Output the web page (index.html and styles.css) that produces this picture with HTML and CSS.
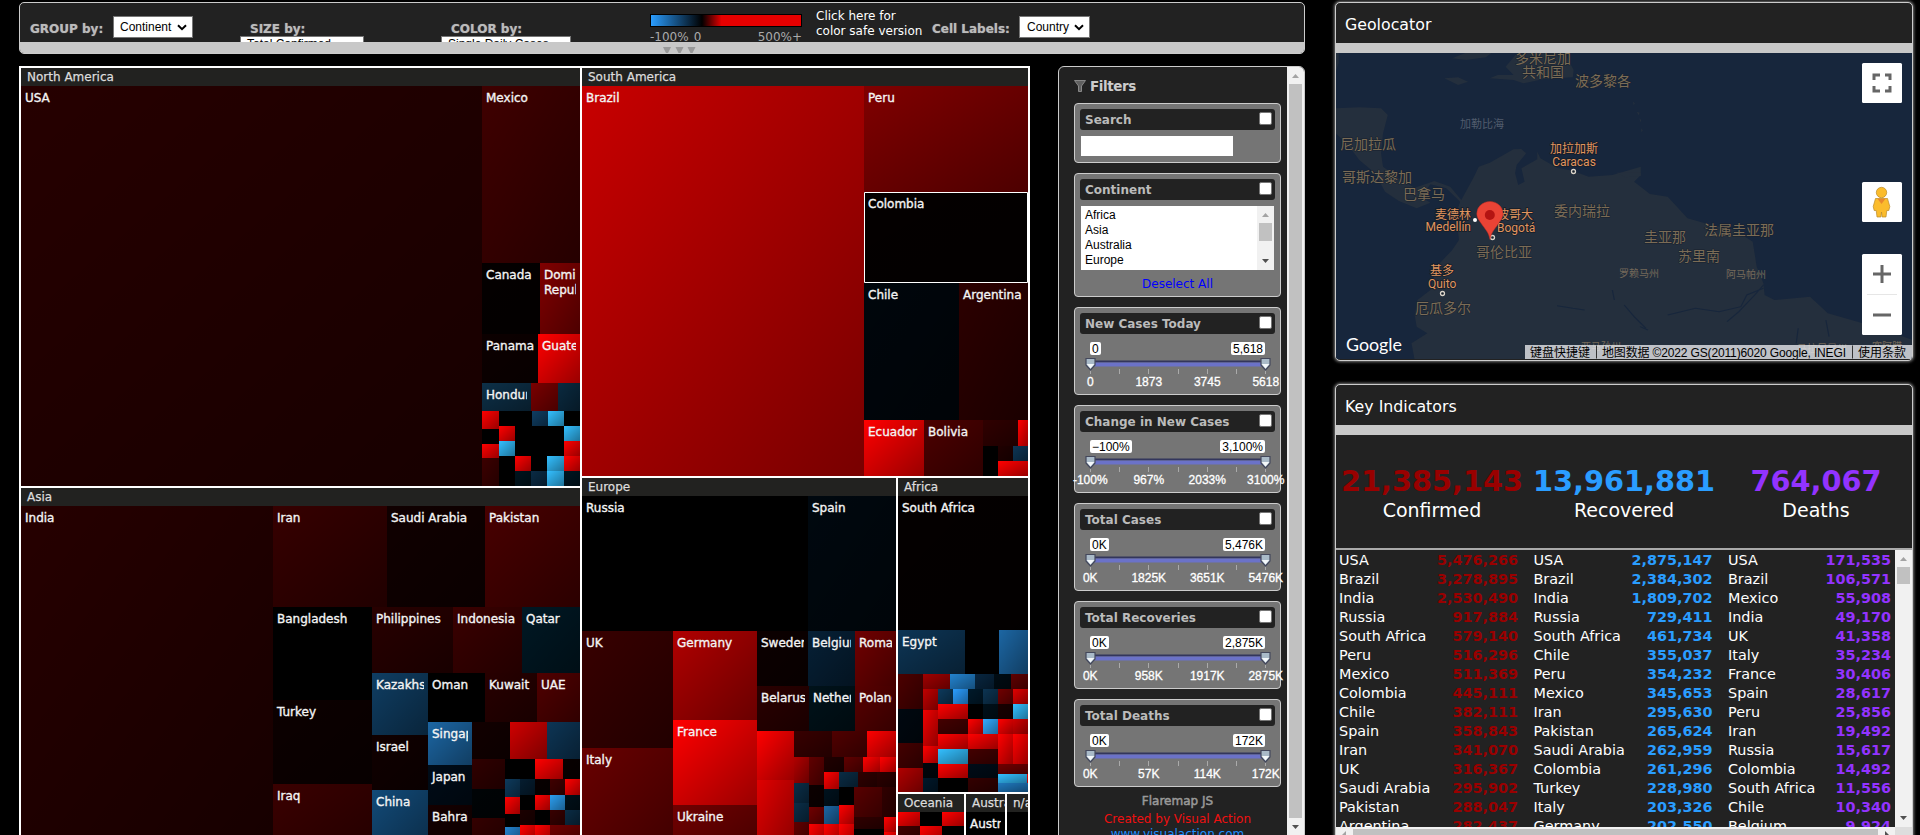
FILE: index.html
```html
<!DOCTYPE html>
<html lang="en">
<head>
<meta charset="utf-8">
<title>Flaremap dashboard</title>
<link rel="stylesheet" href="styles.css">
</head>
<body>
<div class="page">
  <div class="left">
    <header class="toolbar">
      <div class="controls">
        <b class="lbl group-lbl">GROUP by:</b>
        <div class="select sel-group">Continent<svg class="chev" viewBox="0 0 10 7"><path d="M1 1.2l4 4 4-4"/></svg></div>
        <div class="stack size-stack"><b class="lbl">SIZE by:</b><div class="select cut">Total Confirmed</div></div>
        <div class="stack color-stack"><b class="lbl">COLOR by:</b><div class="select cut">Single Daily Cases</div></div>
        <div class="scale">
          <div class="ramp"></div>
          <div class="ramp-labels"><span>-100%</span><span class="zero">0</span><span class="max">500%+</span></div>
          <svg class="marks" viewBox="0 0 34 8"><path d="M0 0h8L4 8zM12.500 0h8l-4 8zM24.500 0h8l-4 8z"/></svg>
        </div>
        <div class="safe">Click here for<br>color safe version</div>
        <b class="lbl cell-lbl">Cell Labels:</b>
        <div class="select sel-cell">Country<svg class="chev" viewBox="0 0 10 7"><path d="M1 1.2l4 4 4-4"/></svg></div>
      </div>
      <div class="strip"></div>
    </header>
    <div class="work">
      <svg class="treemap" id="treemap" viewBox="19 66 1011 769" width="1011" height="769">
        <defs><linearGradient id="shade" x1="0" y1="0" x2="1" y2="1"><stop offset="0" stop-color="#000" stop-opacity="0"/><stop offset="1" stop-color="#000" stop-opacity=".4"/></linearGradient></defs>
      </svg>
      <aside class="filters">
        <div class="filter-list">
          <h2 class="filters-title"><svg class="funnel" viewBox="0 0 12 12"><path d="M.5.500h11L7.500 6v5.500h-3V6z"/></svg>Filters</h2>
          <section class="card"><div class="head">Search<i class="check"></i></div><div class="search"></div></section>
          <section class="card card-list"><div class="head">Continent<i class="check"></i></div>
            <div class="listbox"><div class="options"><div>Africa</div><div>Asia</div><div>Australia</div><div>Europe</div></div>
              <svg class="listbar" viewBox="0 0 17 64"><path fill="#f1f1f1" d="M0 0h17v64H0z"/><path fill="#c1c1c1" d="M2 17h13v18H2z"/><path fill="#a3a3a3" d="M5 11l3.500-4 3.500 4z"/><path fill="#505050" d="M5 53l3.500 4 3.500-4z"/></svg>
            </div><div class="deselect">Deselect All</div></section>
          <div id="sliders"></div>
          <div class="credit"><div class="product">Flaremap JS</div><div class="maker">Created by Visual Action</div><div class="site">www.visualaction.com</div></div>
        </div>
        <div class="vbar"><svg viewBox="0 0 17 17"><path fill="#a3a3a3" d="M5 11l3.500-4 3.500 4z"/></svg><div class="thumb"></div><svg viewBox="0 0 17 17"><path fill="#505050" d="M5 7l3.500 4 3.500-4z"/></svg></div>
      </aside>
    </div>
  </div>
  <div class="right">
    <section class="panel geo">
      <h1 class="title">Geolocator</h1><div class="bar"></div>
      <svg class="map" viewBox="1336 53 577 306" width="577" height="306">
        <rect x="1336" y="53" width="577" height="306" fill="#17263c"/>
        <g transform="translate(1300 0) scale(.3954 .3333)" fill="#242f3d">
          <path d="M290 1080L282 1030L322 1000L295 980L290 945L297 900L330 870L345 800L385 750L402 720L395 640L405 605L370 565L330 553L305 590L330 608L295 625L250 603L215 575L190 520L150 480L125 440L100 410L90 400V325L150 322L205 325L222 345L210 400L205 460L210 500L250 535L290 563L340 543L380 560L408 600L440 530L452 500L480 488L540 448L560 447L572 460L548 495L544 520L552 555L568 545L560 505L600 478L600 455L608 475L650 503L690 512L730 530L790 525L862 500L862 525L845 545L885 582L930 590L980 655L1040 675L1100 690L1145 725L1155 800L1172 850L1175 885L1200 900L1290 890L1335 940L1410 965L1480 990L1550 1020V1080Z"/>
          <path d="M480 235L500 225L540 225L520 200L545 165L600 155L670 160L692 210L690 232L620 236L565 250L540 240ZM365 235L400 232L425 245L400 255ZM385 175L420 158H485L470 172L420 180ZM700 238L740 235L745 250L705 250ZM90 158h8v30l-8 30zM800 518h62v10l-40 4z"/>
          <path d="M842 305l5 5-3 6zM852 335l7 3-3 8zM858 355l5 5-2 7zM863 385l4 6-4 6z"/>
          <g fill="none" stroke="#17263c" stroke-width="3"><path d="M1172 865L1130 885L1115 920L1060 935L1000 925L930 945M1172 855L1150 885L1110 935L1080 965M860 980L880 990M720 930L690 925L650 917M790 870L795 900M1260 985L1255 1030M1330 960L1338 1010M820 915L845 950L875 985"/></g>
        </g>
        <g class="country">
          <text x="1515" y="63">多米尼加</text><text x="1522" y="77">共和国</text><text x="1575" y="86">波多黎各</text>
          <text x="1340" y="149">尼加拉瓜</text><text x="1342" y="182">哥斯达黎加</text><text x="1403" y="199">巴拿马</text>
          <text x="1554" y="216">委内瑞拉</text><text x="1644" y="242">圭亚那</text><text x="1704" y="235">法属圭亚那</text><text x="1678" y="261">苏里南</text>
          <text x="1476" y="257">哥伦比亚</text><text x="1415" y="313">厄瓜多尔</text>
        </g>
        <text class="sea" x="1460" y="128">加勒比海</text>
        <g class="state"><text x="1619" y="277">罗赖马州</text><text x="1726" y="278">阿马帕州</text><text x="1581" y="350">亚马孙州</text><text x="1797" y="352">马拉尼昂州</text><text x="1872" y="350">塞阿腊</text></g>
        <g class="city">
          <text x="1574" y="153" text-anchor="middle">加拉加斯</text><text x="1574" y="165.500" text-anchor="middle">Caracas</text>
          <text x="1471" y="219" text-anchor="end">麦德林</text><text x="1471" y="230.500" text-anchor="end">Medellín</text>
          <text x="1497" y="219">波哥大</text><text x="1497" y="231.500">Bogotá</text>
          <text x="1430" y="275">基多</text><text x="1428" y="287.500">Quito</text>
        </g>
        <circle cx="1475" cy="220" r="2" fill="#fff"/>
        <g fill="#17202b" stroke="#d8d2c8" stroke-width="1.300"><circle cx="1573.500" cy="171.500" r="2"/><circle cx="1442.500" cy="293.500" r="2"/><circle cx="1492.500" cy="237.500" r="2"/></g>
        <path d="M1490 239.500c-1.500-7-3.800-9-7-13.500-3.800-5.500-6.200-8-6.200-12.500a13 12 0 0 1 26.200 0c0 4.500-2.400 7-6.200 12.500-3.200 4.500-5.300 6.500-6.800 13.500z" fill="#ea4335" stroke="#b92c22" stroke-width=".5"/>
        <circle cx="1489.800" cy="215" r="5" fill="#b31412"/>
        <text class="google" x="1346" y="350.500" textLength="56" lengthAdjust="spacingAndGlyphs">Google</text>
        <g fill="#fff"><rect x="1862" y="63" width="40" height="40" rx="1.500"/><rect x="1862" y="182" width="40" height="40" rx="1.500"/><rect x="1862" y="254" width="40" height="81" rx="1.500"/></g>
        <path d="M1874 80v-5h6M1885 75h5v5M1890 86v5h-5M1880 91h-6v-5M1873 274h18M1882 265v18M1873 315h18" fill="none" stroke="#666" stroke-width="3"/>
        <path d="M1867 294.500h30" stroke="#e6e6e6"/>
        <g fill="#fbbc2c" stroke="#b98a2a" stroke-width=".7"><path d="M1875.500 198.500h12l2.300 8-1 4h-2l-.8 6.500h-3.900l-.6-5-.6 5h-3.900l-.8-6.500h-2l-1-4z"/><circle cx="1881.500" cy="192.500" r="5.200"/></g><path d="M1877.500 198.800h8l-4 5.200z" fill="#e9882c"/>
        <rect x="1525" y="345" width="388" height="14" fill="#e9ebee" fill-opacity=".78"/>
        <g class="legal"><text x="1530" y="356.500" textLength="60">键盘快捷键</text><text x="1602" y="356.500" textLength="244">地图数据 ©2022 GS(2011)6020 Google, INEGI</text><text x="1858" y="356.500" textLength="48">使用条款</text></g>
        <path d="M1596.500 345.500v13M1852.500 345.500v13" stroke="#333"/>
      </svg>
    </section>
    <section class="panel key">
      <h1 class="title">Key Indicators</h1><div class="bar"></div>
      <div class="totals">
        <div class="total red"><b>21,385,143</b><span>Confirmed</span></div>
        <div class="total blue"><b>13,961,881</b><span>Recovered</span></div>
        <div class="total purple"><b>764,067</b><span>Deaths</span></div>
      </div>
      <div class="tables">
        <div class="cols" id="cols"></div>
        <div class="vbar kbar"><svg viewBox="0 0 17 17"><path fill="#a3a3a3" d="M5 11l3.500-4 3.500 4z"/></svg><div class="thumb"></div><div class="gap"></div><svg viewBox="0 0 17 17"><path fill="#505050" d="M5 6l3.500 4 3.500-4z"/></svg></div>
      </div>
      <div class="hbar"><svg viewBox="0 0 17 8"><path fill="#a3a3a3" d="M10 4v4H6z"/></svg><div class="hthumb"></div><svg viewBox="0 0 17 8"><path fill="#505050" d="M7 4v4h4z"/></svg><div class="corner"></div></div>
    </section>
  </div>
</div>
<script src="app.js"></script>
</body>
</html>
```
FILE: styles.css
```css
* { box-sizing: border-box; }
body { margin: 0; background: #000; font-family: "DejaVu Sans", Verdana, sans-serif; font-size: 12px; color: #fff; overflow: hidden; }
.page { display: flex; gap: 30px; height: 835px; padding: 2px 0 0 19px; overflow: hidden; }
.left { width: 1286px; }
.toolbar { height: 52px; border: 1px solid #ccc; border-radius: 5px; background: #222; overflow: hidden; }
.controls { display: flex; height: 39px; align-items: flex-start; }
.strip { height: 11px; background: #c8c8c8; }
.lbl { color: #bbb; line-height: 15px; white-space: nowrap; text-shadow: 0 0 1px #888; }
.group-lbl { width: 83px; margin: 19px 0 0 10px; }
.select { background: #fff; border: 1px solid #767676; color: #000; font: 12px/20px "Liberation Sans", Arial, sans-serif; padding: 0 5px 0 7px; display: flex; justify-content: space-between; align-items: center; height: 22px; margin-top: 13px; white-space: nowrap; }
.sel-group { width: 80px; padding-left: 6px; }
.chev { width: 10px; height: 7px; fill: none; stroke: #000; stroke-width: 2; }
.stack { display: flex; flex-direction: column; height: 39px; padding-top: 19px; overflow: hidden; }
.stack .lbl { padding-left: 10px; height: 14px; flex: none; }
.cut { margin-top: 0; flex: none; padding-left: 6px; align-items: flex-start; line-height: 15px; }
.size-stack { width: 124px; margin-left: 47px; }
.color-stack { width: 130px; margin-left: 77px; }
.scale { width: 152px; margin: 11px 0 0 79px; position: relative; }
.ramp { height: 13px; border: 1px solid #000; background: linear-gradient(90deg, #2a9dff 0, #000 34%, #e60000 47%); }
.ramp-labels { display: flex; color: #aaa; line-height: 15px; margin-top: 3px; }
.zero { margin-left: 5px; }
.max { margin-left: auto; }
.marks { position: absolute; left: 13px; top: 33px; width: 34px; height: 8px; fill: #999; }
.safe { width: 116px; margin: 6px 0 0 14px; line-height: 15px; white-space: nowrap; }
.cell-lbl { width: 87px; margin-top: 19px; }
.sel-cell { width: 71px; }
.work { display: flex; gap: 28px; margin-top: 12px; }
.treemap { flex: none; display: block; }
.treemap text { font-size: 12px; fill: #f4f4f4; stroke: #f4f4f4; stroke-width: .35px; }
.treemap .region { fill: #dcdcdc; stroke: #dcdcdc; stroke-width: .25px; }
.filters { width: 247px; height: 775px; border: 1px solid #ccc; border-radius: 6px 6px 0 0; background: #222; display: flex; overflow: hidden; }
.filter-list { width: 228px; padding: 10px 0 0 15px; flex: none; }
.filters-title { margin: 0; font-size: 13.500px; line-height: 19px; height: 26px; color: #ccc; display: flex; gap: 4px; letter-spacing: -.4px; }
.funnel { width: 12px; height: 12px; margin-top: 3px; fill: #606060; stroke: #888; stroke-width: 1; }
.card { width: 207px; height: 60px; border: 1px solid #ccc; border-radius: 4px; background: #757575; padding: 5px; margin-bottom: 10px; }
.head { height: 21px; width: 195px; border-radius: 3px; background: #222; color: #bbb; font-weight: bold; line-height: 22px; padding: 0 3px 0 5px; display: flex; justify-content: space-between; }
.check { width: 13px; height: 13px; margin-top: 3px; background: #fff; border: 1px solid #767676; border-radius: 2px; }
.search { width: 152px; height: 20px; background: #fff; margin: 6px 0 0 1px; }
.card-list { height: 124px; }
.listbox { display: flex; justify-content: space-between; width: 193px; height: 64px; margin: 6px 0 0 1px; background: #fff; color: #000; font: 12px/15px "Liberation Sans", Arial, sans-serif; }
.options { padding: 2px 0 0 4px; }
.listbar { width: 17px; height: 64px; }
.deselect { color: #00f; text-align: center; line-height: 15px; margin: 7px 0 0; }
.card-slider { height: 88px; }
.values { display: flex; justify-content: space-between; margin: 8px 10px 0; height: 13px; font: 12px/14px "Liberation Sans", Arial, sans-serif; color: #000; }
.values span { background: #fff; border-radius: 2px; padding: 0 2px; }
.slider { display: block; width: 185px; height: 20px; margin: 3px 0 0 5px; }
.ticks { display: flex; justify-content: space-between; margin: -3px -20px 0 -19px; font: 12px/14px "Liberation Sans", Arial, sans-serif; -webkit-text-stroke: .3px #fff; }
.ticks span { width: 58.500px; text-align: center; white-space: nowrap; }
.credit { width: 207px; text-align: center; line-height: 19px; margin-top: -4px; }
.product { color: #999; -webkit-text-stroke: .5px #999; line-height: 16px; padding-bottom: 1px; }
.maker { color: #f01010; }
.site { color: #1e90ff; line-height: 11px; }
.vbar { width: 17px; background: #f1f1f1; display: flex; flex-direction: column; }
.vbar svg { width: 17px; height: 17px; flex: none; }
.filters .vbar { height: 768px; }
.thumb { flex: 1; margin: 0 2px; background: #c1c1c1; }
.right { width: 578px; }
.panel { border: 1px solid #ccc; border-radius: 5px; background: #222; overflow: hidden; box-shadow: 0 0 3px 1px #777; }
.geo { height: 359px; }
.title { margin: 0; height: 40px; padding-left: 9px; font-weight: normal; font-size: 15.800px; line-height: 43px; }
.bar { height: 10px; background: #c8c8c8; }
.map { display: block; }
.map text { font-family: Roboto, "Noto Sans CJK SC", sans-serif; }
.country text { font-size: 14px; fill: #7b6c56; stroke: #17202c; stroke-width: 1px; paint-order: stroke; }
.map .sea { font-size: 11px; fill: #515c6d; }
.state text { font-size: 10px; fill: #75695a; }
.city text { font-size: 12px; fill: #e0955f; stroke: #151c26; stroke-width: 1.500px; paint-order: stroke; }
.map .google { font-family: Lato, sans-serif; font-size: 18px; fill: #fff; }
.map .legal text { font-family: "Liberation Sans", "Noto Sans CJK SC", sans-serif; font-size: 12px; fill: #000; }
.key { margin-top: 23px; height: 470px; }
.totals { height: 113px; display: flex; padding: 28px 0 0 0; }
.total { width: 192.300px; display: flex; flex-direction: column; align-items: center; font-size: 19px; line-height: 24px; }
.total b { font-size: 28.800px; line-height: 36px; height: 35px; }
.total span { color: #fff; }
.red { color: #990000; }
.blue { color: #2a9dff; }
.purple { color: #9333ff; }
.tables { display: flex; justify-content: space-between; height: 279px; border-top: 2px solid #aaa; overflow: hidden; }
.cols { display: flex; gap: 15.500px; padding: 1px 0 0 3px; font-size: 14.400px; line-height: 19px; }
.col { width: 179px; }
.col:last-child { width: 163px; }
.row { display: flex; justify-content: space-between; height: 19px; }
.row span { color: #fff; }
.kbar .thumb { flex: none; height: 17px; }
.gap { flex: 1; }
.hbar { height: 17px; background: #f1f1f1; display: flex; }
.hbar svg { width: 17px; height: 8px; }
.hthumb { width: 525px; height: 13px; margin-top: 2px; background: #c1c1c1; }
.corner { width: 17px; background: #ddd; margin-left: auto; }
```
FILE: app.js
```javascript
// Each cell: left top right bottom colour [label]
const regions = `21 68 580 North America
582 68 1028 South America
21 488 580 Asia
582 478 896 Europe
898 478 1028 Africa
898 794 964 Oceania
966 794 1005 Australia
1007 794 1028 n/a`;
const cells = `21 86 482 486 260000 USA
482 86 580 263 3f0000 Mexico
482 263 540 334 040000 Canada
540 263 580 334 800000 Domi|Republic
482 334 538 383 0c0000 Panama
538 334 580 383 ff0000 Guatemala
482 383 531 411 0d3048 Honduras
531 383 558 411 7a0000
558 383 580 411 0a2a40
482 411 499 429 ff0000
532 411 548 426 0f3d62
548 411 564 426 33bfff
482 444 499 458 ff0000
482 458 499 486 3c0000
499 426 515 441 ff0000
499 441 515 456 33bfff
564 426 580 441 33bfff
564 441 580 456 ff0000
564 456 580 471 ff0000
515 456 531 471 ff0000
547 456 564 471 33bfff
547 471 564 486 33bfff
515 471 531 486 00141e
531 471 547 486 0a2b45
564 471 580 486 001622
582 86 864 476 c80000 Brazil
864 86 1028 192 800000 Peru
864 192 1028 283 040000 Colombia
864 283 959 420 00060c Chile
959 283 1028 420 2c0000 Argentina
864 420 924 476 ff0000 Ecuador
924 420 983 476 4c0000 Bolivia
983 420 1018 446 300000
1018 420 1028 446 ff0000
998 446 1013 461 200000
1013 446 1028 461 0d3555
998 461 1028 476 ff0000
21 506 273 835 260000 India
273 506 387 607 360000 Iran
387 506 485 607 100000 Saudi Arabia
485 506 580 607 480000 Pakistan
273 607 372 700 000000 Bangladesh
372 607 453 673 280000 Philippines
453 607 522 673 3a0000 Indonesia
522 607 580 673 001824 Qatar
273 700 372 784 0c0000 Turkey
273 784 372 860 3a0000 Iraq
372 673 428 735 0f3d62 Kazakhstan
428 673 485 722 000000 Oman
485 673 537 722 280000 Kuwait
537 673 580 722 500000 UAE
372 735 428 790 100000 Israel
372 790 428 850 124a78 China
428 722 472 765 1c66a3 Singapore
428 765 472 805 000c18 Japan
428 805 472 850 140000 Bahrain
472 722 510 759 120000
510 722 547 759 d00000
547 722 580 759 0d3555
472 759 505 789 300000
472 789 505 818 000406
472 818 505 850 340000
535 759 563 779 ff0000
563 759 580 779 080000
505 779 520 797 0d3a5c
520 779 535 795 051d30
535 779 550 795 080000
550 779 565 795 400000
565 779 580 795 ff0000
505 797 520 814 ff0000
535 795 550 810 ff0000
550 795 565 810 2c9eef
565 795 580 810 00101a
520 810 535 825 1c0000
550 810 565 825 380000
565 810 580 825 0a2c45
505 827 520 845 2383cf
520 825 535 845 ff0000
535 825 550 845 ff0000
550 825 580 845 700000
582 496 808 631 000000 Russia
808 496 896 631 00080f Spain
582 631 673 748 380000 UK
582 748 673 860 680000 Italy
673 631 757 720 b00000 Germany
673 720 757 805 ff0000 France
673 805 757 860 700000 Ukraine
757 631 808 686 0c0000 Sweden
808 631 855 686 062036 Belgium
855 631 896 686 700000 Romania
757 686 809 731 2a0000 Belarus
809 686 855 731 00121a Netherlands
855 686 896 731 580000 Poland
757 731 794 780 ff0000
757 780 794 860 e00000
794 731 832 757 380000
832 731 867 757 500000
867 731 896 757 ff0000
794 757 809 783 b00000
809 757 824 785 600000
824 757 844 772 200000
844 757 863 772 600000
863 757 880 772 ff0000
880 757 896 772 ff0000
824 772 839 789 ff0000
839 772 858 787 0a2c45
858 772 877 787 300000
877 772 896 787 2c0000
794 783 809 803 0a2e48
794 803 809 822 0a2e48
794 822 809 850 600000
809 785 824 807 0c0000
809 807 824 824 700000
809 824 824 850 ff0000
824 789 839 806 00121e
824 806 839 824 1c66a3
824 824 839 850 ff0000
839 805 854 824 ff0000
839 824 854 850 ff0000
854 787 882 817 580000
882 787 896 829 300000
854 817 884 829 300000
884 817 896 832 ff0000
884 832 896 850 ff0000
898 496 1028 630 040000 South Africa
898 630 965 674 0d3555 Egypt
999 630 1028 674 1c66a3
898 674 923 709 4c0000
923 674 950 689 a00000
950 674 975 689 2383cf
975 674 994 689 082640
994 674 1011 689 000c14
1011 674 1028 689 600000
898 709 923 743 000810
898 743 923 768 440000
898 768 923 792 b00000
923 689 938 710 c00000
923 710 938 746 f00000
923 746 938 763 ff0000
923 763 938 778 00060c
923 778 938 792 00182a
938 689 953 704 0d3a5c
953 689 968 704 2a9dff
968 689 983 704 001a2b
983 689 998 704 0c3452
998 689 1013 704 700000
1013 689 1028 704 e00000
938 704 968 719 ff0000
983 704 998 719 00101a
998 704 1013 719 180000
1013 704 1028 719 33bfff
938 719 968 734 440000
968 719 983 734 ff0000
983 719 998 734 33aaff
998 719 1013 734 ff0000
1013 719 1028 734 d00000
938 734 968 749 ff0000
968 734 998 749 ff0000
998 734 1013 764 ff0000
1013 734 1028 764 ff0000
938 749 968 764 33bfff
968 749 998 764 440000
938 764 968 778 ff0000
968 764 998 778 000c18
998 764 1028 774 700000
998 774 1027 783 33bfff
998 783 1028 792 1f78bd
1027 774 1028 783 ff0000
968 778 998 792 340000
898 812 920 826 ff0000
942 812 964 826 ff0000
898 826 920 845 400000
920 826 942 845 ff0000
966 812 1005 850 000000 Australia`;
const esc = s => s.replace(/&/g, '&amp;');
// A nested svg clips its label to the cell
const label = (x, y, w, h, dx, dy, text, cls) =>
  `<svg x="${x}" y="${y}" width="${w}" height="${h}"><text class="${cls}">${text.split('|').map((t, i) =>
    `<tspan x="${dx}" y="${dy + i * 15}">${esc(t)}</tspan>`).join('')}</text></svg>`;
let out = '<path fill="#fff" d="M19 66h1011v769H19z"/><path d="M21 68h559v418H21zM582 68h446v408H582zM21 488h559v347H21zM582 478h314v357H582zM898 478h130v314H898zM898 794h66v41h-66zM966 794h39v41h-39zM1007 794h21v41h-21z"/>';
for (const line of cells.split('\n')) {
  const [x, y, r, b, c, ...rest] = line.split(' ');
  const w = r - x, h = b - y, box = `x="${x}" y="${y}" width="${w}" height="${h}"`;
  out += `<rect ${box} fill="#${c}"/><rect ${box} fill="url(#shade)"/>`;
  if (rest.length) out += label(x, y, w - 4, h, 4, 16, rest.join(' '), 'cell');
}
for (const line of regions.split('\n')) {
  const [x, y, r, ...rest] = line.split(' ');
  out += `<rect x="${x}" y="${y}" width="${r - x}" height="18" fill="#222220"/>` + label(x, y, r - x, 18, 6, 13, rest.join(' '), 'region');
}
out += '<path d="M864.5 192.500h163v90h-163z" fill="none" stroke="#fff"/>';
document.getElementById('treemap').insertAdjacentHTML('beforeend', out);

const sliders = [
  ['New Cases Today', '0', '5,618', ['0', '1873', '3745', '5618']],
  ['Change in New Cases', '−100%', '3,100%', ['-100%', '967%', '2033%', '3100%']],
  ['Total Cases', '0K', '5,476K', ['0K', '1825K', '3651K', '5476K']],
  ['Total Recoveries', '0K', '2,875K', ['0K', '958K', '1917K', '2875K']],
  ['Total Deaths', '0K', '172K', ['0K', '57K', '114K', '172K']]
];
const knob = x => `<path d="M${x - 4.5} .5h9v6.500l-4.500 5-4.500-5z" fill="#a9bac8" stroke="#44485c" stroke-width="1.200"/><path d="M${x - 3.800} 6h7.600l-3.800 4.500z" fill="#f4f8fa"/>`;
document.getElementById('sliders').innerHTML = sliders.map(([name, lo, hi, t]) =>
  `<section class="card card-slider"><div class="head">${name}<i class="check"></i></div>
  <div class="values"><span>${lo}</span><span>${hi}</span></div>
  <svg class="slider" viewBox="0 0 185 20" overflow="visible"><path fill="#33365c" d="M5 2.500h175v2H5z"/><path fill="#6b72c8" d="M5 4.500h175v4H5z"/>
  <path stroke="#aaa" d="M5.500 11v5M34.500 11v5M63.500 11v5M93.500 11v5M122.500 11v5M151.500 11v5M180.500 11v5"/>${knob(5.500)}${knob(180.500)}</svg>
  <div class="ticks">${t.map(v => `<span>${v}</span>`).join('')}</div></section>`).join('');

const tables = [
  ['red', 'USA 5,476,266;Brazil 3,278,895;India 2,530,490;Russia 917,884;South Africa 579,140;Peru 516,296;Mexico 511,369;Colombia 445,111;Chile 382,111;Spain 358,843;Iran 341,070;UK 316,367;Saudi Arabia 295,902;Pakistan 288,047;Argentina 282,437'],
  ['blue', 'USA 2,875,147;Brazil 2,384,302;India 1,809,702;Russia 729,411;South Africa 461,734;Chile 355,037;Peru 354,232;Mexico 345,653;Iran 295,630;Pakistan 265,624;Saudi Arabia 262,959;Colombia 261,296;Turkey 228,980;Italy 203,326;Germany 202,550'],
  ['purple', 'USA 171,535;Brazil 106,571;Mexico 55,908;India 49,170;UK 41,358;Italy 35,234;France 30,406;Spain 28,617;Peru 25,856;Iran 19,492;Russia 15,617;Colombia 14,492;South Africa 11,556;Chile 10,340;Belgium 9,924']
];
document.getElementById('cols').innerHTML = tables.map(([c, rows]) =>
  `<div class="col ${c}">` + rows.split(';').map(r => {
    const i = r.lastIndexOf(' ');
    return `<div class="row"><span>${r.slice(0, i)}</span><b>${r.slice(i + 1)}</b></div>`;
  }).join('') + '</div>').join('');
```
